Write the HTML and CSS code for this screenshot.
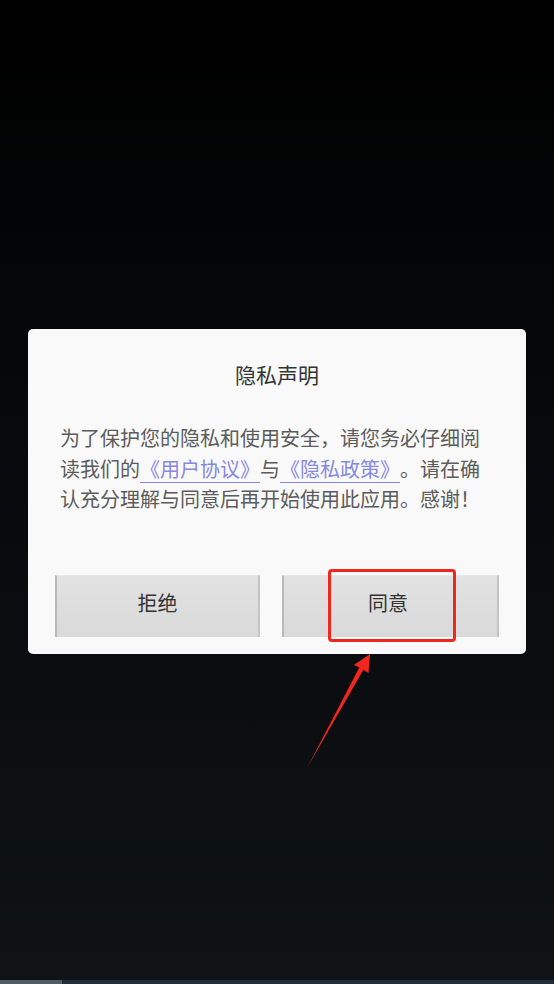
FILE: index.html
```html
<!DOCTYPE html>
<html lang="zh-CN">
<head>
  <meta charset="UTF-8">
  <meta name="viewport" content="width=device-width, initial-scale=1.0">
  <title>隐私声明</title>
  <link rel="stylesheet" href="styles.css">
</head>
<body>
  <div class="screen">
    <div class="dialog">
      <h2 class="title">隐私声明</h2>
      <p class="message"><span>为了保护您的隐私和使用安全，请您务必仔细阅读我们的</span><a href="#">《用户协议》</a><span>与</span><a href="#">《隐私政策》</a><span>。请在确认充分理解与同意后再开始使用此应用。感谢！</span></p>
      <div class="actions">
        <button type="button" class="btn btn-refuse">拒绝</button>
        <button type="button" class="btn btn-agree">同意<span class="highlight"></span></button>
      </div>
    </div>
  </div>

  <svg class="arrow" viewBox="300 650 80 125" width="80" height="125">
    <polygon points="370,654 368.5,673 363.3,670 307,768 359.3,667.6 353.8,665" fill="#f1261f"/>
  </svg>

  <div class="nav-bar">
    <div class="nav-thumb"></div>
  </div>
</body>
</html>
```

FILE: styles.css
```css
:root {
  --font-family: 'Noto Sans CJK SC', 'Noto Sans', sans-serif;
  --dialog-bg: #f9f9f9;
  --text-dark: #333333;
  --text-body: #5c5c5c;
  --link: #8787e4;
  --mark-red: #f1261f;
  --radius: 5px;
}
* {
  box-sizing: border-box;
  margin: 0;
  padding: 0;
  font-family: var(--font-family);
}
body {
  height: 100vh;
  display: flex;
  flex-direction: column;
  background: linear-gradient(#000000 0%, #07090b 45%, #101316 100%);
  position: relative;
  overflow: hidden;
}
.screen {
  flex: 1;
  display: flex;
  align-items: center;
  justify-content: center;
  padding: 3px 28px 0;
}
.dialog {
  width: 100%;
  height: 325px;
  background: var(--dialog-bg);
  border-radius: var(--radius);
  padding: 30px 0 0;
}
.title {
  font-size: 21px;
  font-weight: 400;
  line-height: 30px;
  text-align: center;
  color: var(--text-dark);
}
.message {
  margin-top: 34px;
  padding: 0 32px;
  font-size: 20px;
  line-height: 30.5px;
  color: var(--text-body);
  text-spacing-trim: space-all;
  font-feature-settings: "halt" 0, "chws" 0;
}
.message a {
  color: var(--link);
  text-decoration: underline;
  text-underline-offset: 5px;
  text-decoration-thickness: 1px;
}
.actions {
  display: flex;
  gap: 22px;
  padding: 0 27px;
  margin-top: 60px;
}
.btn {
  position: relative;
  height: 62px;
  border: none;
  border-left: 2px solid #b9b9b9;
  border-right: 2px solid #c4c4c4;
  border-top: 1px solid #e6e6e6;
  background: linear-gradient(#e2e2e2, #d9d9d9);
  font-size: 20px;
  color: var(--text-dark);
  padding-bottom: 8px;
  cursor: pointer;
}
.btn-refuse {
  width: 205px;
}
.btn-agree {
  width: 217px;
  padding-right: 5px;
}
.highlight {
  position: absolute;
  left: 44px;
  top: -7px;
  width: 128px;
  height: 73px;
  border: 3px solid var(--mark-red);
  border-radius: 4px;
}
.arrow {
  position: absolute;
  left: 300px;
  top: 650px;
}
.nav-bar {
  height: 4px;
  background: #1f2b36;
}
.nav-thumb {
  width: 62px;
  height: 100%;
  background: #4e5c63;
}
```
